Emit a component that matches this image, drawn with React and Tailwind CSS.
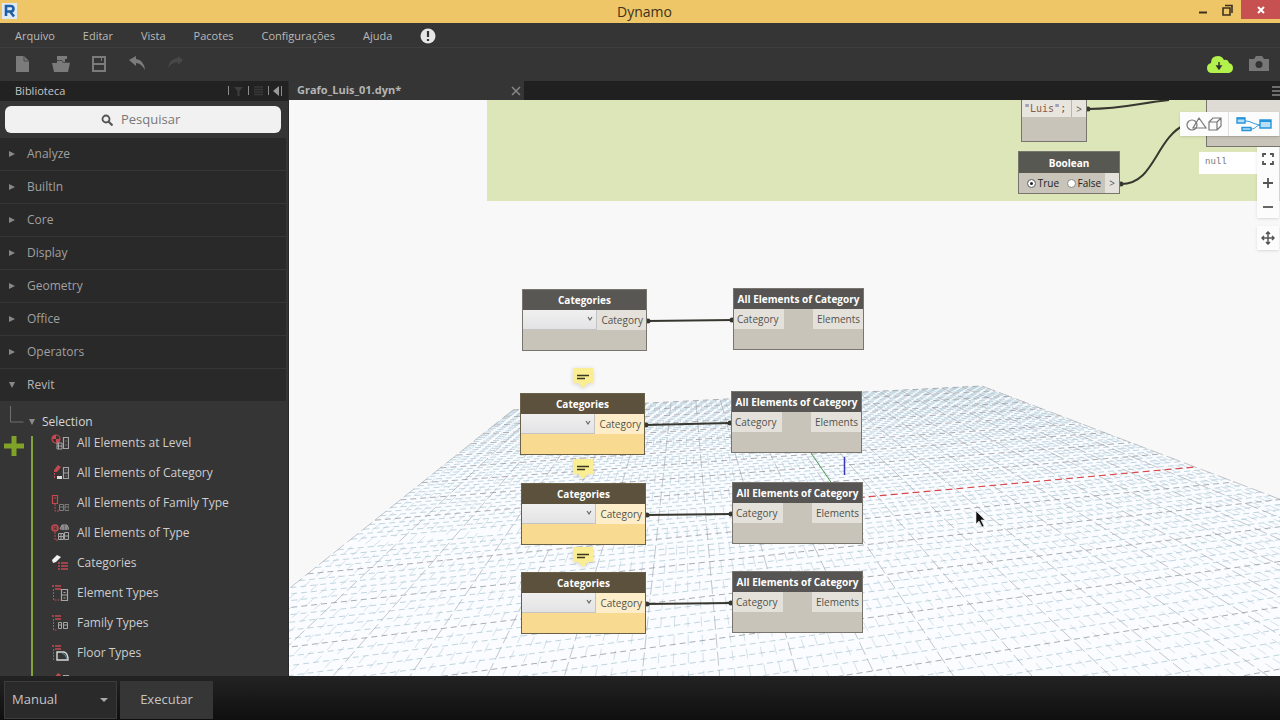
import React, { useMemo, useState } from 'react'
import clsx from 'clsx'

const menus = ['Arquivo', 'Editar', 'Vista', 'Pacotes', 'Configurações', 'Ajuda']

const libraries = ['Analyze', 'BuiltIn', 'Core', 'Display', 'Geometry', 'Office', 'Operators', 'Revit']

const selectionItems = [
  { name: 'All Elements at Level', icon: 'level' },
  { name: 'All Elements of Category', icon: 'category' },
  { name: 'All Elements of Family Type', icon: 'familyType' },
  { name: 'All Elements of Type', icon: 'type' },
  { name: 'Categories', icon: 'categories' },
  { name: 'Element Types', icon: 'elementTypes' },
  { name: 'Family Types', icon: 'familyTypes' },
  { name: 'Floor Types', icon: 'floorTypes' },
]

// node positions on the workspace, in canvas pixels
const categoryNodes = [
  { id: 'cat1', x: 233, y: 189 },
  { id: 'cat2', x: 231, y: 293, selected: true },
  { id: 'cat3', x: 232, y: 383, selected: true },
  { id: 'cat4', x: 232, y: 472, selected: true },
]

const elementNodes = [
  { id: 'el1', x: 444, y: 188 },
  { id: 'el2', x: 442, y: 291 },
  { id: 'el3', x: 443, y: 382 },
  { id: 'el4', x: 443, y: 471 },
]

const notes = [
  { x: 284, y: 268 },
  { x: 284, y: 359 },
  { x: 284, y: 447 },
]

// ground plane corners with their homogeneous weights
const GROUND = {
  nearRight: [906, 367, 1],
  farRight: [693, 286, 1.7167],
  farLeft: [224, 310, 1.4473],
  nearLeft: [55.5, 444.4, 0.7306],
}

function project(u, v) {
  const a = (1 + u) / 2
  const weights = [
    [GROUND.nearRight, a * (1 - v)],
    [GROUND.farRight, a * v],
    [GROUND.farLeft, (1 - a) * v],
    [GROUND.nearLeft, (1 - a) * (1 - v)],
  ]
  let x = 0
  let y = 0
  let w = 0
  weights.forEach(([[px, py, pw], k]) => {
    x += px * pw * k
    y += py * pw * k
    w += pw * k
  })
  return [x / w, y / w]
}

function segment(from, to) {
  const [x1, y1] = project(...from)
  const [x2, y2] = project(...to)
  return `M${x1.toFixed(1)} ${y1.toFixed(1)}L${x2.toFixed(1)} ${y2.toFixed(1)}`
}

function GroundGrid() {
  const lines = useMemo(() => {
    const out = { majorRows: '', minorRows: '', majorCols: '', minorCols: '' }
    for (let i = -50; i <= 50; i++) {
      const t = i / 50
      const major = i % 5 === 0
      out[major ? 'majorCols' : 'minorCols'] += segment([t, 1], [t, -0.85])
      if (t > -0.85 && i !== 0) out[major ? 'majorRows' : 'minorRows'] += segment([-1, t], [1, t])
    }
    return out
  }, [])

  return (
    <g fill="none">
      <path d={`${segment([-1, 1], [1, 1])}${segment([1, 1], [1, -0.85]).replace('M', 'L')}${segment([-1, -0.85], [-1, 1]).replace('M', 'L')}Z`} fill="#fafcff" />
      <path d={lines.minorCols} stroke="#c4d6e0" strokeWidth="0.7" strokeDasharray="10 8" />
      <path d={lines.minorRows} stroke="#b1cad6" strokeWidth="0.8" strokeDasharray="6 4" />
      <path d={lines.majorCols} stroke="#9ca1a6" strokeWidth="0.6" strokeDasharray="14 4" />
      <path d={lines.majorRows} stroke="#92999f" strokeWidth="0.8" strokeDasharray="6 4" />
      <path d={segment([0, 0], [1, 0])} stroke="#d8484b" strokeWidth="1.2" strokeDasharray="7 4" />
      <path d="M522 353L548 391" stroke="#4f9a52" strokeWidth="1" />
      <path d="M555.500 357V375" stroke="#3d36b8" strokeWidth="1.500" />
    </g>
  )
}

function Wires() {
  return (
    <g fill="none" stroke="#37372f" strokeWidth="2">
      {categoryNodes.map((node, i) => {
        const end = elementNodes[i]
        const y1 = node.y + 32
        const y2 = end.y + 32
        return (
          <g key={node.id}>
            <path d={`M${node.x + 125} ${y1}L${end.x} ${y2}`} />
            <circle cx={node.x + 126} cy={y1} r="2.5" fill="#37372f" stroke="none" />
            <circle cx={end.x - 1} cy={y2} r="2.5" fill="#37372f" stroke="none" />
          </g>
        )
      })}
      <path d="M799 9C835 9 850 3 880 0" />
      <circle cx="799" cy="9" r="2.5" fill="#37372f" stroke="none" />
      <path d="M832 84C866 84 866 38 897 24" />
      <circle cx="832" cy="84" r="2.5" fill="#37372f" stroke="none" />
    </g>
  )
}

function CategoriesNode({ node }) {
  return (
    <div
      className={clsx('absolute w-[125px] border', node.selected ? 'border-[#6b6148] bg-[#f8da90]' : 'border-[#77756e] bg-[#c8c4ba]')}
      style={{ left: node.x, top: node.y }}
    >
      <div className={clsx('h-5 text-center text-[10px] font-bold leading-[21px] text-white', node.selected ? 'bg-[#5b513c]' : 'bg-[#585754]')}>
        Categories
      </div>
      <div className="flex h-5">
        <div className="relative flex-1">
          <select aria-label="Categories" className="block h-5 w-full appearance-none border-r border-b border-[#c4c4c4] bg-gradient-to-b from-[#f0f0f0] to-[#e3e3e5] outline-none" />
          <svg className="pointer-events-none absolute top-1.5 right-1 h-1.5 w-1.5" viewBox="0 0 6 6" fill="none" stroke="#666" strokeWidth="1.200">
            <path d="M1 1l2 3 2-3" />
          </svg>
        </div>
        <span className={clsx('w-[49px] pr-[3px] text-right text-[10px] leading-[21px] text-[#53524e]', node.selected ? 'bg-[#fdeec9]' : 'bg-[#e4e1da]')}>
          Category
        </span>
      </div>
      <div className="h-5" />
    </div>
  )
}

function ElementsNode({ node }) {
  return (
    <div className="absolute w-[131px] border border-[#77756e] bg-[#c8c4ba]" style={{ left: node.x, top: node.y }}>
      <div className="h-5 bg-[#565553] text-center text-[10px] font-bold leading-5 whitespace-nowrap text-white">All Elements of Category</div>
      <div className="flex h-5 justify-between text-[10px] leading-[21px] text-[#53524e]">
        <span className="w-[50px] bg-[#e4e1da] pl-[3px]">Category</span>
        <span className="w-[50px] bg-[#e4e1da] pr-[3px] text-right">Elements</span>
      </div>
      <div className="h-5" />
    </div>
  )
}

function Note({ x, y }) {
  return (
    <svg className="absolute h-5 w-5 drop-shadow-sm" style={{ left: x, top: y }} viewBox="0 0 20 20">
      <path d="M0 0h20v15h-5l-5 5-5-5H0z" fill="#fbee92" />
      <path d="M4 7.500h12M4 10.500h8" stroke="#3b3822" strokeWidth="1.600" />
    </svg>
  )
}

const R = '#c24a50'
const G = '#a5a5a5'

const treeGlyphs = {
  level: (
    <>
      <circle cx="5" cy="5" r="4" fill="none" stroke={R} strokeWidth="1.200" />
      <path d="M5 1a4 4 0 0 0-4 4h4zM5 9a4 4 0 0 0 4-4H5z" fill={R} />
      <path d="M6 9h5v6H6zM7.500 9v6M6 12h5" fill="none" stroke={G} />
      <path d="M12.500 3.500h5v11h-5zM14.500 7h1M14.500 11h1" fill="none" stroke={G} strokeWidth="1.200" />
    </>
  ),
  category: (
    <>
      <path d="M3 6l4-5 3 2-4 5H3z" fill={R} />
      <path d="M3.500 9v6" stroke={R} strokeDasharray="2 1" />
      <path d="M6 12h5v3H6z" fill="#ddd" />
      <path d="M12.500 3.500h5v11h-5zM12 9h5M14.500 6h1M14.500 12h1" fill="none" stroke={G} strokeWidth="1.200" />
    </>
  ),
  familyType: (
    <>
      <path d="M1.500 1.500h5v8h-5zM3 4h2" fill="none" stroke={R} strokeWidth="1.200" />
      <path d="M4 10v7h4" fill="none" stroke={R} strokeDasharray="2 1" />
      <path d="M8.500 10.500h4v6h-4zM14 10.500h4v6h-4zM9 13h3M14 13h4" fill="none" stroke="#7c7c7c" />
    </>
  ),
  type: (
    <>
      <circle cx="4" cy="4" r="3" fill="none" stroke={R} strokeWidth="1.600" />
      <path d="M4 2v4M2 4h4M4 8v8h3" fill="none" stroke={R} strokeDasharray="2 1" />
      <path d="M9 5l2-4h5l2 4zM10 3h7M12 1v5M15 1v5" fill="none" stroke={G} />
      <path d="M7.500 9.500h5v6h-5zM7 12.500h5M10 10v5M13.500 8.500h4v7h-4zM14 12h4" fill="none" stroke={G} />
    </>
  ),
  categories: (
    <>
      <path d="M1 6l5-5 4 2-5 5-3 1z" fill="#f2f2f2" />
      <path d="M7 9h2M10 9h7M7 12h2M10 12h7M7 15h2M10 15h7" stroke={R} strokeWidth="1.400" />
    </>
  ),
  elementTypes: (
    <>
      <path d="M1 2h2M4 2h6M4 5h6" stroke={R} strokeWidth="1.600" />
      <path d="M2.500 5v11H9" fill="none" stroke={R} strokeDasharray="2 1" />
      <path d="M10.500 5.500h6v11h-6zM12.500 8.500h2M11 11h5M12.500 14h2" fill="none" stroke={G} strokeWidth="1.200" />
    </>
  ),
  familyTypes: (
    <>
      <path d="M1 2h2M4 2h6M4 5h6" stroke={R} strokeWidth="1.600" />
      <path d="M2.500 5v11H6" fill="none" stroke={R} strokeDasharray="2 1" />
      <path d="M7.500 8.500h3v6h-3zM12.500 8.500h4v6h-4zM7 11h4M13 11h3" fill="none" stroke={G} />
    </>
  ),
  floorTypes: (
    <>
      <path d="M1 2h2M4 2h6M4 5h6" stroke={R} strokeWidth="1.600" />
      <path d="M2.500 5v11" fill="none" stroke={R} strokeDasharray="2 1" />
      <path d="M6 8h7q4 1 4 8H6z" fill="none" stroke="#d9d9d9" strokeWidth="1.400" />
      <path d="M11 9q4 1 5 6" fill="none" stroke="#5f8fa8" />
    </>
  ),
}

function ToolButton({ label, children }) {
  return (
    <button type="button" aria-label={label} className="flex h-8 w-[38px] items-center justify-center">
      <svg className="h-[18px] w-[18px]" viewBox="0 0 18 18" fill="#7b7b7b">
        {children}
      </svg>
    </button>
  )
}

function TitleBar() {
  return (
    <header className="flex h-[23px] shrink-0 items-start justify-between bg-[#eec567] text-[#3c3220]">
      <svg className="mt-[3px] ml-0.5 h-4 w-4" viewBox="0 0 16 16">
        <rect width="15" height="16" fill="#dfe9f2" />
        <path d="M4 13V3h4.500q3 0 3 2.700T8.500 8.500H5M8 8.500l4 5" fill="none" stroke="#1f5fa8" strokeWidth="2.600" />
      </svg>
      <h1 className="flex-1 pl-20 text-center text-sm leading-[23px]">Dynamo</h1>
      <div className="flex">
        <button type="button" aria-label="Minimizar" className="h-[19px] w-6">
          <svg className="mx-auto h-3 w-3" viewBox="0 0 12 12"><path d="M2 8.500h8" stroke="#3c3220" strokeWidth="2" /></svg>
        </button>
        <button type="button" aria-label="Restaurar" className="h-[19px] w-6">
          <svg className="mx-auto h-3 w-3" viewBox="0 0 12 12" fill="none" stroke="#3c3220" strokeWidth="1.600">
            <path d="M2 4h7v7H2zM4 1.500h7V9" />
          </svg>
        </button>
        <button type="button" aria-label="Fechar" className="ml-0.5 h-[19px] w-[39px] bg-[#c75050]">
          <svg className="mx-auto h-3 w-3" viewBox="0 0 12 12"><path d="M3 3l6 6M9 3l-6 6" stroke="#fff" strokeWidth="2" /></svg>
        </button>
      </div>
    </header>
  )
}

function Sidebar() {
  const [query, setQuery] = useState('')

  return (
    <aside className="flex w-[289px] shrink-0 flex-col overflow-hidden border-r border-[#2a2a2a] bg-[#353535]">
      <div className="flex h-5 shrink-0 items-center justify-between bg-[#222] pr-1.5 pl-[15px]">
        <h2 className="text-[11px] text-[#c4c4c4]">Biblioteca</h2>
        <svg className="h-3 w-14" viewBox="0 0 56 12">
          <path d="M2.500 1v9M22.500 1v9M42.500 1v9M55.500 1v10" stroke="#8c8c8c" />
          <path d="M8 2h9l-3.500 4v5h-2V6z" fill="#3d3d3d" />
          <path d="M28 2h9M28 4.500h9M28 7h9M28 9.500h9" stroke="#393939" strokeWidth="1.500" />
          <path d="M53 1v10l-6-5z" fill="#999" />
        </svg>
      </div>
      <label className="mt-[5px] mr-[7px] mb-[5px] ml-[5px] flex h-[27px] shrink-0 items-center justify-center gap-2 rounded-md bg-[#f1f1f1]">
        <svg className="h-3 w-3" viewBox="0 0 12 12" fill="none" stroke="#555">
          <circle cx="5" cy="5" r="3.500" strokeWidth="1.800" />
          <path d="M7.500 7.500l4 4" strokeWidth="2.200" />
        </svg>
        <input
          type="text"
          aria-label="Pesquisar"
          placeholder="Pesquisar"
          value={query}
          onChange={(e) => setQuery(e.target.value)}
          className="w-16 bg-transparent text-[13px] text-[#333] outline-none placeholder:text-[#777]"
        />
      </label>
      <ul className="mr-0.5 shrink-0 bg-[#292929]">
        {libraries.map((name) => (
          <li key={name} className="border-b border-[#363636]">
            <button type="button" className="flex h-8 w-full items-center gap-3 pl-[9px] text-left text-xs text-[#a0a0a0]">
              <svg className="h-1.5 w-1.5" viewBox="0 0 6 6" fill="#888">
                {name === 'Revit' ? <path d="M0 0h6L3 6z" /> : <path d="M0 0l6 3-6 3z" />}
              </svg>
              <span className={name === 'Revit' ? 'text-[#b5b5b5]' : ''}>{name}</span>
            </button>
          </li>
        ))}
      </ul>
      <div className="min-h-0 flex-1 overflow-hidden">
        <button type="button" className="flex h-[26px] w-full items-start pl-[9px] text-left">
          <svg className="h-[26px] w-[33px]" viewBox="0 0 33 26">
            <path d="M1.500 4v16h13" fill="none" stroke="#6f6f6f" />
            <path d="M20 17h6l-3 6z" fill="#8a8a8a" />
          </svg>
          <span className="pt-2.5 text-xs leading-5 text-[#d5d5d5]">Selection</span>
        </button>
        <div className="flex">
          <svg className="mx-1 mt-2 h-5 w-5 shrink-0" viewBox="0 0 20 20"><path d="M10 0v20M0 10h20" stroke="#7fa329" strokeWidth="5" /></svg>
          <div className="mt-2 ml-[3px] w-0.5 shrink-0 bg-[#84a23a]" />
          <ul className="pl-[18px]">
            {selectionItems.map((item) => (
              <li key={item.name}>
                <button type="button" className="flex h-[30px] items-center gap-2 text-left text-xs whitespace-nowrap text-[#cdcdcd]">
                  <svg className="h-[18px] w-[18px]" viewBox="0 0 18 18">{treeGlyphs[item.icon]}</svg>
                  {item.name}
                </button>
              </li>
            ))}
            <li className="h-[30px] pt-1">
              <svg className="h-[18px] w-[18px]" viewBox="0 0 18 18">{treeGlyphs.category}</svg>
            </li>
          </ul>
        </div>
      </div>
    </aside>
  )
}

function ViewControls() {
  return (
    <div className="absolute top-3 right-px flex flex-col items-end text-[#555]">
      <div className="flex h-6 bg-[#fcfcfc] shadow">
        <button type="button" aria-label="3D" className="flex w-[49px] items-center justify-center border-r border-[#e0e0e0]">
          <svg className="h-4 w-9" viewBox="0 0 36 16" fill="none" stroke="#777" strokeWidth="1.200">
            <circle cx="6" cy="9" r="5" />
            <path d="M13 2l7 10H7zM23 6h8v8h-8zM23 6l4-4h8v8l-4 4M31 6l4-4" />
          </svg>
        </button>
        <button type="button" aria-label="Grafo" className="flex w-[50px] items-center justify-center">
          <svg className="h-4 w-9" viewBox="0 0 36 16" fill="#b9def5" stroke="#2695dc" strokeWidth="1.400">
            <path d="M9 5c6 0 8 3 15 4M15 13c5 0 4-3 9-4" fill="none" strokeWidth="1" />
            <path d="M1 2h8v5H1zM6 11.500h9v3H6zM24 4h11v8H24z" />
            <path d="M1 2.500h8M24 5h11" strokeWidth="2" />
          </svg>
        </button>
      </div>
      <div className="mt-[11px] flex w-[22px] flex-col bg-[#fcfcfc] shadow">
        <button type="button" aria-label="Ajustar" className="flex h-6 items-center justify-center">
          <svg className="h-3 w-3" viewBox="0 0 12 12" fill="none" stroke="currentColor" strokeWidth="1.800"><path d="M1 4V1h3M8 1h3v3M11 8v3H8M4 11H1V8" /></svg>
        </button>
        <button type="button" aria-label="Ampliar" className="flex h-6 items-center justify-center">
          <svg className="h-3 w-3" viewBox="0 0 12 12" stroke="currentColor" strokeWidth="1.800"><path d="M6 1v10M1 6h10" /></svg>
        </button>
        <button type="button" aria-label="Reduzir" className="flex h-[23px] items-center justify-center">
          <svg className="h-3 w-3" viewBox="0 0 12 12" stroke="currentColor" strokeWidth="1.800"><path d="M1 6h10" /></svg>
        </button>
      </div>
      <button type="button" aria-label="Mover" className="mt-2 flex h-6 w-[22px] items-center justify-center bg-[#fcfcfc] shadow">
        <svg className="h-3.5 w-3.5" viewBox="0 0 14 14" fill="none" stroke="currentColor" strokeWidth="1.500">
          <path d="M7 1v12M1 7h12M5 3l2-2 2 2M5 11l2 2 2-2M3 5L1 7l2 2M11 5l2 2-2 2" />
        </svg>
      </button>
    </div>
  )
}

function Workspace() {
  const [flag, setFlag] = useState('True')

  return (
    <main className="relative min-h-0 flex-1 overflow-hidden bg-[#f8f8f8]">
      <div className="absolute top-0 right-0 left-[198px] h-[101px] bg-[#dce6b8]" />
      <svg className="absolute inset-0 h-full w-full">
        <GroundGrid />
        <Wires />
      </svg>

      <div className="absolute top-[-20px] left-[732px] h-[62px] w-[66px] border border-[#77756e] bg-[#c8c4ba]">
        <div className="mt-[18px] flex h-[18px] bg-[#e8e5df] text-[10px] leading-5 text-[#5b5854]">
          <code className="flex-1 border-r border-[#bbb7ae] pl-0.5 font-['DejaVu_Sans_Mono',monospace]"><span className="text-[#8a5a48]">"Luis"</span>;</code>
          <span className="w-3.5 text-center">&gt;</span>
        </div>
      </div>

      <fieldset className="absolute top-[51px] left-[729px] w-[102px] border border-[#77756e] bg-[#c8c4ba]">
        <div className="h-[21px] bg-[#585853] text-center text-[10px] font-bold leading-[22px] text-white">Boolean</div>
        <div className="flex h-5 items-center text-[10px] text-[#222]">
          <div className="flex flex-1 items-center justify-around pl-1">
            {['True', 'False'].map((value) => (
              <label key={value} className="flex items-center gap-0.5">
                <input
                  type="radio"
                  name="flag"
                  checked={flag === value}
                  onChange={() => setFlag(value)}
                  className="h-[9px] w-[9px] appearance-none rounded-full border border-[#888] bg-white checked:bg-[#222] checked:shadow-[inset_0_0_0_2px_#fff]"
                />
                {value}
              </label>
            ))}
          </div>
          <span className="h-5 w-3.5 bg-[#e4e1da] text-center leading-5 text-[#555]">&gt;</span>
        </div>
      </fieldset>

      <div className="absolute top-[-20px] left-[917px] h-[67px] w-[120px] border border-[#77756e] bg-[#c8c4ba]">
        <div className="h-14 border-b border-[#bcb8af] bg-[#dedbd4]" />
      </div>
      <div className="absolute top-[52px] left-[910px] h-[22px] w-[80px] bg-white pl-1.5 font-['Liberation_Mono',monospace] text-[9px] leading-5 text-[#777]">null</div>

      {categoryNodes.map((node) => (
        <CategoriesNode key={node.id} node={node} />
      ))}
      {elementNodes.map((node) => (
        <ElementsNode key={node.id} node={node} />
      ))}
      {notes.map((note) => (
        <Note key={note.y} x={note.x} y={note.y} />
      ))}

      <ViewControls />

      <svg className="absolute top-[410px] left-[686px] h-[18px] w-3" viewBox="0 0 12 18">
        <path d="M1 1v13l3-3 3 6 2-1-3-6h4z" fill="#111" stroke="#eee" strokeWidth="0.600" />
      </svg>
    </main>
  )
}

function App() {
  return (
    <div className="flex h-screen flex-col overflow-hidden bg-[#353535] font-['Open_Sans',sans-serif]">
      <TitleBar />

      <nav className="flex h-[25px] shrink-0 items-center gap-7 border-b border-[#3e3e3e] pt-0.5 pl-[15px] text-[11px] text-[#b9b9b9]">
        {menus.map((menu) => (
          <button key={menu} type="button">{menu}</button>
        ))}
        <button type="button" aria-label="Notificações">
          <svg className="h-4 w-4" viewBox="0 0 16 16">
            <circle cx="8" cy="8" r="7.500" fill="#e6e6e6" />
            <path d="M8 3v6M8 11v2" stroke="#333" strokeWidth="2.200" />
          </svg>
        </button>
      </nav>

      <div className="flex h-[33px] shrink-0 items-center pr-[11px] pb-0.5 pl-1">
        <ToolButton label="Novo"><path d="M2 1h8l5 5v11H2z" /><path d="M10 1v5h5" fill="none" stroke="#4a4a4a" /></ToolButton>
        <ToolButton label="Abrir"><path d="M5 1h10v3h-2v3h2l3 1-2 9H2L0 8h5z" /><path d="M5 5.500h5l1 2h6" fill="none" stroke="#4a4a4a" /></ToolButton>
        <ToolButton label="Salvar"><path d="M2 1h14v16H2zM4 3v5h10V3h-2v3h-1V3zM4 10v5h10v-5z" fillRule="evenodd" /></ToolButton>
        <ToolButton label="Desfazer"><path d="M1 5l7-4v3q8 1 9 11-4-7-9-7v3z" /></ToolButton>
        <ToolButton label="Refazer"><path d="M17 5l-5-4v2Q3 4 2 13q4-6 10-6v3z" fill="#484848" /></ToolButton>
        <div className="ml-auto flex items-center gap-[15px]">
          <button type="button" aria-label="Atualizar">
            <svg className="h-[18px] w-7" viewBox="0 0 28 18">
              <path d="M6 18q-5 0-5-5 0-4 4-5 0-7 7-7 4 0 6 4 4-1 5 3 4 1 4 5t-4 5z" fill="#b3f14c" />
              <path d="M13 7v5M11 11l2 3 2-3z" fill="#333" stroke="#333" strokeWidth="1.500" />
            </svg>
          </button>
          <button type="button" aria-label="Exportar imagem">
            <svg className="h-4 w-5" viewBox="0 0 20 16">
              <path d="M0 3h5l2-3h6l2 3h5v12H0z" fill="#777" />
              <circle cx="10" cy="8.500" r="3.500" fill="#333" />
            </svg>
          </button>
        </div>
      </div>

      <div className="flex min-h-0 flex-1">
        <Sidebar />
        <div className="flex min-w-0 flex-1 flex-col">
          <div className="flex h-[19px] shrink-0 items-center bg-[#202020]">
            <div className="flex h-full w-[235px] items-center justify-between bg-[#353535] pr-[3px] pl-2">
              <span className="text-[11px] font-bold text-[#b5b5b5]">Grafo_Luis_01.dyn*</span>
              <button type="button" aria-label="Fechar aba">
                <svg className="h-2.5 w-2.5" viewBox="0 0 10 10"><path d="M1 1l8 8M9 1l-8 8" stroke="#888" strokeWidth="1.500" /></svg>
              </button>
            </div>
            <svg className="ml-auto h-3 w-2" viewBox="0 0 8 12"><path d="M0 2h8M0 6h8M0 10h8" stroke="#888" strokeWidth="1.500" /></svg>
          </div>
          <Workspace />
        </div>
      </div>

      <footer className="flex h-11 shrink-0 items-end gap-[3px] bg-gradient-to-b from-[#232323] to-[#0f0f0f] pb-px pl-1 text-[13px] text-[#c4c4c4]">
        <div className="relative">
          <select aria-label="Modo de execução" className="block h-[38px] w-[113px] appearance-none border border-[#3c3c3c] bg-[#2a2a2a] pl-[7px] outline-none">
            <option>Manual</option>
            <option>Automático</option>
          </select>
          <svg className="pointer-events-none absolute top-4 right-[9px] h-1.5 w-2" viewBox="0 0 8 6"><path d="M0 1h8L4 5z" fill="#aaa" /></svg>
        </div>
        <button type="button" className="h-[38px] w-[93px] bg-[#363636]">Executar</button>
      </footer>
    </div>
  )
}

export default App
